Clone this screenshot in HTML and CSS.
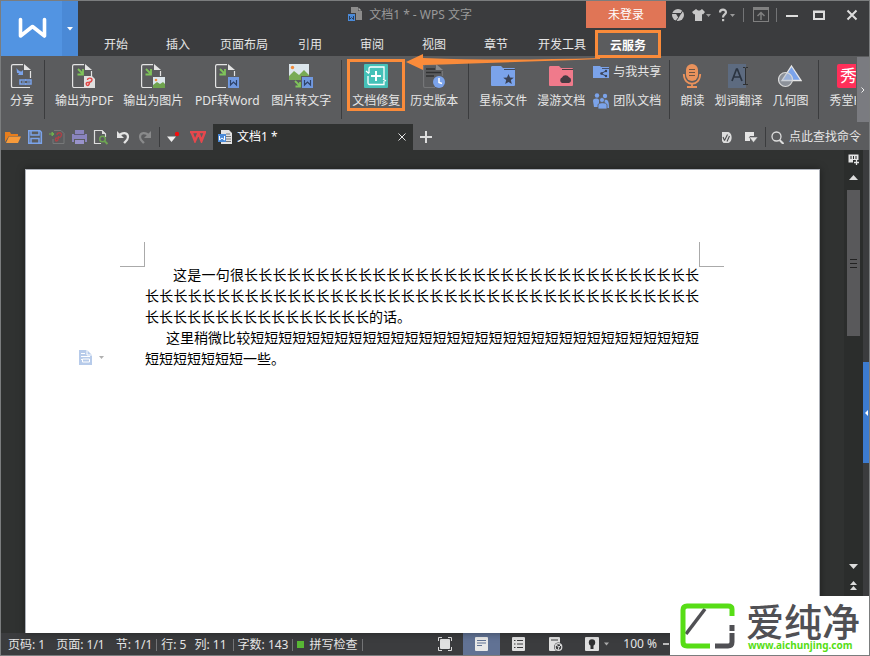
FILE: index.html
```
<!DOCTYPE html>
<html lang="zh-CN">
<head>
    <meta charset="UTF-8">
    <meta name="viewport" content="width=device-width, initial-scale=1.0">
    <title>文档1 * - WPS 文字</title>
    <link rel="stylesheet" href="styles.css">
</head>
<body>
    <div class="app">
        <header class="header">
            <button class="logo" aria-label="WPS">
                <svg width="61" height="55" viewBox="0 0 61 55"><path d="M19.500 18.500v16.500l12-9.500 12 9.500v-16.500" fill="none" stroke="#fff" stroke-width="3.600" stroke-linecap="round" stroke-linejoin="round"/></svg>
                <span class="logo-drop"><svg width="6" height="4" viewBox="0 0 6 4"><path d="M0 0h6L3 3.500z" fill="#fff"/></svg></span>
            </button>
            <div class="header-main">
                <div class="title-row">
                    <div class="title">
                        <svg width="15" height="15" viewBox="0 0 15 15"><path d="M3 0h7v4h4v9H8V6H3z" fill="#8c8c8c"/><path d="M10.500.5l3 3h-3z" fill="#aaa"/><rect y="7" width="7" height="7" fill="#4a8ad8"/><path d="M1.500 9v3.500l2-2 2 2V9" fill="none" stroke="#2b3f5c"/></svg>
                        <h1>文档1 * - WPS 文字</h1>
                    </div>
                    <button class="login">未登录</button>
                    <div class="window-tools">
                        <button aria-label="皮肤"><svg width="14" height="14" viewBox="0 0 14 14"><circle cx="7" cy="7" r="6" fill="#c4c4c4"/><path d="M4.500 5h6L7.500 10z" fill="#3b3c3e"/><path d="M1 5.500h4M10 5.500L12 2M7.500 9.500L5 13" stroke="#3b3c3e" fill="none"/></svg></button>
                        <button aria-label="外观"><svg width="19" height="14" viewBox="0 0 19 14"><path d="M4 1l2 1.500h2L10 1l3 3-2 2.500-1-.5v7H3V6l-1 .5L0 4z" fill="#c8c8c8"/><path d="M14 6h5l-2.500 3z" fill="#999"/></svg></button>
                        <button aria-label="帮助"><svg width="18" height="14" viewBox="0 0 18 14"><path d="M2 4.500C2 .8 8 .8 8 4.300 8 6.500 5 6.500 5 9.500" fill="none" stroke="#c8c8c8" stroke-width="2.200"/><path d="M4 11h2.200v2.200H4z" fill="#c8c8c8"/><path d="M12 6h5l-2.500 3z" fill="#999"/></svg></button>
                        <i class="line"></i>
                        <button aria-label="收起功能区"><svg width="16" height="15" viewBox="0 0 16 15"><rect x=".5" y=".5" width="15" height="14" fill="none" stroke="#808080"/><path d="M0 2h16" stroke="#808080" stroke-width="2"/><path d="M8 13V6M4.500 9L8 5.500 11.500 9" fill="none" stroke="#808080" stroke-width="1.500"/></svg></button>
                        <i class="line"></i>
                        <button class="window-button" aria-label="最小化"><svg width="12" height="12" viewBox="0 0 12 12"><path d="M0 7h12" stroke="#ddd" stroke-width="2"/></svg></button>
                        <button class="window-button" aria-label="最大化"><svg width="12" height="10" viewBox="0 0 12 10"><path d="M1 2h10v7H1zM0 1.500h12" fill="none" stroke="#ddd" stroke-width="2"/></svg></button>
                        <button class="window-button" aria-label="关闭"><svg width="12" height="12" viewBox="0 0 12 12"><path d="M1.500 1.500l9 9M10.500 1.500l-9 9" stroke="#ddd" stroke-width="2"/></svg></button>
                    </div>
                </div>
                <nav class="tabs">
                    <button>开始</button>
                    <button>插入</button>
                    <button>页面布局</button>
                    <button>引用</button>
                    <button>审阅</button>
                    <button>视图</button>
                    <button>章节</button>
                    <button>开发工具</button>
                    <button class="active marked">云服务</button>
                </nav>
            </div>
        </header>

        <div class="ribbon">
            <button class="tool">
                <svg width="24" height="24" viewBox="0 0 24 24"><path d="M13 .6H3a1.500 1.500 0 0 0-1.500 1.500v20A1.500 1.500 0 0 0 3 23.500h17M20.500 7v7" fill="none" stroke="#e4e4e4" stroke-width="1.200"/><path d="M14 0l7 6h-7z" fill="#e4e4e4"/><path d="M6.500 4l.5 5h2l-1 2h5V6l-1.500 1.500C9 7.500 8 6 6.500 4z" fill="#7ba3ea"/><path d="M10 16h11v4H10z" fill="none" stroke="#7ba3ea" stroke-width="1.500"/><path d="M12 18h3M17 18h3M15.700 15v2M15.700 19v2" stroke="#7ba3ea"/></svg>
                <span>分享</span>
            </button>
            <i class="divider"></i>
            <button class="tool">
                <svg width="24" height="24" viewBox="0 0 24 24"><path d="M12 .6H2A1.500 1.500 0 0 0 .6 2v20A1.500 1.500 0 0 0 2 23.500h10M19.500 7v5" fill="none" stroke="#e4e4e4" stroke-width="1.200"/><path d="M13 0l7 6h-7z" fill="#e4e4e4"/><path d="M6 5l5 5M11 5v5.500H5.500" fill="none" stroke="#7fc35a" stroke-width="1.800"/><path d="M12 12h8l3 3v9H12z" fill="#e0e0e0"/><path d="M15.500 16c0-2.500 5-2.500 4.500 0s-3 2.500-4.500 2.500c-2 0-1.500 3 0 3s2-2 2-4" fill="none" stroke="#e04545" stroke-width="1.400"/></svg>
                <span>输出为PDF</span>
            </button>
            <button class="tool">
                <svg width="24" height="24" viewBox="0 0 24 24"><path d="M12 .6H2A1.500 1.500 0 0 0 .6 2v20A1.500 1.500 0 0 0 2 23.500h9M19.500 7v5" fill="none" stroke="#e4e4e4" stroke-width="1.200"/><path d="M13 0l7 6h-7z" fill="#e4e4e4"/><path d="M5 5l5 5M10 5v5.500H4.500" fill="none" stroke="#7fc35a" stroke-width="1.800"/><path d="M12 13h12v11H12z" fill="#dce6ec"/><circle cx="15" cy="16" r="1.300" fill="#f08a3c"/><path d="M12 24v-3l4-3 3 2 3-2 2 2v4z" fill="#6fa34e"/></svg>
                <span>输出为图片</span>
            </button>
            <button class="tool wide">
                <svg width="24" height="24" viewBox="0 0 24 24"><path d="M12 .6H2A1.500 1.500 0 0 0 .6 2v20A1.500 1.500 0 0 0 2 23.500h9M19.500 7v5" fill="none" stroke="#e4e4e4" stroke-width="1.200"/><path d="M13 0l7 6h-7z" fill="#e4e4e4"/><path d="M5 5l5 5M10 5v5.500H4.500" fill="none" stroke="#7fc35a" stroke-width="1.800"/><path d="M13 13h11v11H13z" fill="#7199e0"/><path d="M15.500 16v5l3-3 3 3v-5" fill="none" stroke="#2f4368" stroke-width="1.200"/></svg>
                <span>PDF转Word</span>
            </button>
            <button class="tool">
                <svg width="24" height="24" viewBox="0 0 24 24"><path d="M0 0h20v16H0z" fill="#dce6ec"/><circle cx="3.500" cy="3.500" r="1.700" fill="#f08a3c"/><path d="M0 16v-4l5-5 5 4 5-5 5 5v5z" fill="#78ab55"/><path d="M12 12h12v12H12z" fill="#5b5c5e"/><path d="M13 13h11v11H13z" fill="#7199e0"/><path d="M15.500 16v5l3-3 3 3v-5" fill="none" stroke="#2f4368" stroke-width="1.200"/><path d="M6 17l5 5M11 18v4.500H6.500" fill="none" stroke="#7fc35a" stroke-width="1.800"/></svg>
                <span>图片转文字</span>
            </button>
            <i class="divider"></i>
            <button class="tool marked">
                <svg width="24" height="24" viewBox="0 0 24 24"><rect width="24" height="24" rx="1" fill="#45c1b8"/><path d="M5 9V4.500A1.500 1.500 0 0 1 6.500 3H20v12M20 17v3.500H5.500A1.500 1.500 0 0 1 4 19v-7M2 7l3 2.500M22 17l-3-2" fill="none" stroke="#fff" stroke-width="1.300"/><path d="M12 7v10M7 12h10" stroke="#fff" stroke-width="2"/></svg>
                <span>文档修复</span>
            </button>
            <button class="tool">
                <svg width="24" height="24" viewBox="0 0 24 24"><path d="M14 .6H3A1.500 1.500 0 0 0 1.600 2v20A1.500 1.500 0 0 0 3 23.500h10M20.500 7v5" fill="none" stroke="#757678" stroke-width="1.200"/><path d="M14 0l7 6h-7z" fill="#8b8b8c"/><path d="M4 5h9M4 8.500h15M4 12h8" stroke="#303132" stroke-width="1.400"/><circle cx="17" cy="18" r="6" fill="#7ba3ea"/><path d="M17 14v4.500l3 1" fill="none" stroke="#fff" stroke-width="1.500"/></svg>
                <span>历史版本</span>
            </button>
            <i class="divider"></i>
            <button class="tool">
                <svg width="24" height="24" viewBox="0 0 24 24"><path d="M0 3.500C0 2.500.5 2 1.500 2H10l2 2h11a1 1 0 0 1 1 1v16a1 1 0 0 1-1 1H1a1 1 0 0 1-1-1z" fill="#7ba3ea"/><path d="M13 5.500h11" stroke="#3e4860"/><path d="M17.500 10l1.500 3.500 3.800.2-3 2.400 1 3.900-3.300-2.100-3.300 2.100 1-3.900-3-2.400 3.800-.2z" fill="#3b4254"/></svg>
                <span>星标文件</span>
            </button>
            <button class="tool">
                <svg width="24" height="24" viewBox="0 0 24 24"><path d="M0 3.500C0 2.500.5 2 1.500 2H10l2 2h11a1 1 0 0 1 1 1v16a1 1 0 0 1-1 1H1a1 1 0 0 1-1-1z" fill="#f07a8b"/><path d="M13 5.500h11" stroke="#4d3a40"/><path d="M13 19a3 3 0 0 1 0-5.500 4 4 0 0 1 7-.2A3 3 0 0 1 20 19z" fill="#463b42"/></svg>
                <span>漫游文档</span>
            </button>
            <div class="tool-stack">
                <button><svg width="16" height="16" viewBox="0 0 16 16"><path d="M0 2h7l1 1h8v11H0z" fill="#7ba3ea"/><path d="M9 4.500h7" stroke="#46526e"/><path d="M13 7l-5 2.500 5 2.500" fill="none" stroke="#3b4254"/><circle cx="8.500" cy="9.500" r="1.300" fill="#3b4254"/><circle cx="13" cy="7" r="1.200" fill="#3b4254"/><circle cx="13" cy="12" r="1.200" fill="#3b4254"/></svg>与我共享</button>
                <button><svg width="16" height="16" viewBox="0 0 16 16"><circle cx="4" cy="2.500" r="2.200" fill="#7ba3ea"/><circle cx="12" cy="3" r="2.200" fill="#7ba3ea"/><path d="M0 8c0-3 5-3 6-1v7H1z" fill="#7ba3ea"/><path d="M11 7c4-1 5 1 5 8h-3z" fill="#7ba3ea"/><path d="M5 16v-4c0-3 9-3 9 0v4z" fill="#7ba3ea" stroke="#5b5c5e" stroke-width=".8"/><circle cx="9" cy="7" r="2.500" fill="#7ba3ea" stroke="#5b5c5e" stroke-width=".8"/></svg>团队文档</button>
            </div>
            <i class="divider"></i>
            <button class="tool">
                <svg width="24" height="24" viewBox="0 0 24 24"><rect x="6" width="12" height="17" rx="6" fill="#ea925c"/><path d="M9 5.500h6M9 8.500h6M9 11.500h6" stroke="#6d5545"/><path d="M3.800 10c0 13 16.400 13 16.400 0M12 19v4M7 23h10" fill="none" stroke="#ea925c" stroke-width="1.800"/></svg>
                <span>朗读</span>
            </button>
            <button class="tool">
                <svg width="24" height="24" viewBox="0 0 24 24"><path d="M2 0h18v24H2z" fill="#5d6b80"/><path d="M6 17l4.500-12h.8L16 17M7.500 13h7" fill="none" stroke="#2b3440" stroke-width="1.700"/><path d="M17 3.500h2l.5.5.500-.5h2M19.500 4v16M17 20.500h5" fill="none" stroke="#2f3133"/></svg>
                <span>划词翻译</span>
            </button>
            <button class="tool">
                <svg width="24" height="24" viewBox="0 0 24 24"><path d="M13.500 2L23 16.500H4z" fill="#7ba3ea" stroke="#e8e8e8" stroke-width="1.300"/><circle cx="7.500" cy="15.500" r="7" fill="#b5bdca" fill-opacity=".55" stroke="#d8d8d8" stroke-width="1.200"/></svg>
                <span>几何图</span>
            </button>
            <i class="divider"></i>
            <button class="tool clipped">
                <svg width="24" height="24" viewBox="0 0 24 24"><rect width="24" height="24" rx="2" fill="#ff2f59"/><text class="badge-char" x="3" y="18">秀</text></svg>
                <span>秀堂H5</span>
            </button>
            <button class="ribbon-next" aria-label="更多"><svg width="4" height="6" viewBox="0 0 4 6"><path d="M.5.5L3 3 .5 5.500" fill="none" stroke="#eee"/></svg></button>
        </div>

        <div class="quickbar">
            <div class="quick-icons">
                <button aria-label="打开"><svg width="16" height="16" viewBox="0 0 16 16"><path d="M0 13V3h5l1 2h7v2H4z" fill="#e87e1d"/><path d="M4 7.500h12L13 14H1z" fill="#f79a3a"/></svg></button>
                <button aria-label="保存"><svg width="16" height="16" viewBox="0 0 16 16"><path d="M1.800 1.800h11l1.500 1.500v11H1.800z" fill="none" stroke="#7ba3ea" stroke-width="1.600"/><path d="M4 2v4h8V2M4 14V9.500h8V14" fill="none" stroke="#7ba3ea" stroke-width="1.500"/></svg></button>
                <button aria-label="输出PDF"><svg width="16" height="16" viewBox="0 0 16 16"><path d="M5 1.500h7l3 3v10H4V10" fill="none" stroke="#777879"/><path d="M0 5h3M3 3L5 5 3 7z" fill="#6fae4d" stroke="#6fae4d"/><path d="M8 6c0-3 5-3 4.500 0S9 9 7.500 9s-1.500 3 0 3 2-2 2-5" fill="none" stroke="#ad4247" stroke-width="1.400"/></svg></button>
                <button aria-label="打印"><svg width="16" height="16" viewBox="0 0 16 16"><path d="M4 1h9v4h3v8h-2v-3H3v3H1V5h3z" fill="#8a84bd"/><path d="M3 5.500h11" stroke="#5f5c78"/><path d="M4 11h9v4H4z" fill="#9993cb"/></svg></button>
                <button aria-label="打印预览"><svg width="16" height="16" viewBox="0 0 16 16"><path d="M8 14.500H1.500v-13H9L12.500 5v3" fill="none" stroke="#ddd" stroke-width="1.200"/><path d="M9 1v4h4z" fill="#ddd"/><circle cx="9.500" cy="10" r="2.800" fill="none" stroke="#6da452" stroke-width="1.400"/><path d="M11.500 12l3 3" stroke="#6da452" stroke-width="2"/></svg></button>
                <button aria-label="撤销"><svg width="16" height="16" viewBox="0 0 16 16"><path d="M4 7c3-4 9-4 9 1 0 3-2 4-4 6" fill="none" stroke="#e4e4e4" stroke-width="2.200"/><path d="M2 2v7h7z" fill="#e4e4e4"/></svg></button>
                <button aria-label="恢复"><svg width="16" height="16" viewBox="0 0 16 16"><path d="M12 7C9 3 3 3 3 8c0 3 2 4 4 6" fill="none" stroke="#898a8b" stroke-width="2.200"/><path d="M14 2v7H7z" fill="#898a8b"/></svg></button>
            </div>
            <i class="line"></i>
            <button class="quick-more" aria-label="自定义"><svg width="14" height="14" viewBox="0 0 14 14"><path d="M0 6.500h9L4.500 12z" fill="#eee"/><circle cx="10" cy="4" r="2.200" fill="#f40d0d"/></svg></button>
            <button class="wps-home" aria-label="首页"><svg width="17" height="12" viewBox="0 0 17 12"><path d="M0 1h9M1.500 1L5 10l3.500-8 3 8L15 1M8 1h8" fill="none" stroke="#e5484d" stroke-width="2.400"/></svg></button>
            <div class="doc-tab">
                <svg width="15" height="15" viewBox="0 0 15 15"><path d="M3 0h8l3 3v11H3z" fill="#e2e2e2"/><path d="M8 4h4M8 6.500h5M8 9h5M8 11.500h5" stroke="#77797b"/><path d="M0 4h8v8H0z" fill="#4a8ad8"/><path d="M1.500 6v4l2.500-2 2.500 2V6" fill="none" stroke="#fff"/></svg>
                <span>文档1 *</span>
                <button aria-label="关闭文档"><svg width="8" height="8" viewBox="0 0 8 8"><path d="M.5.5l7 7M7.500.5l-7 7" stroke="#e4e4e4"/></svg></button>
            </div>
            <button class="new-tab" aria-label="新建"><svg width="12" height="12" viewBox="0 0 12 12"><path d="M6 0v12M0 6h12" stroke="#ddd" stroke-width="2"/></svg></button>
            <div class="quick-right">
                <button aria-label="文档助手"><svg width="10" height="11" viewBox="0 0 10 11"><path d="M0 0h5.500C11 0 11 11 5.500 11H1.500L0 9z" fill="#ddd"/><path d="M2.500 8.500l3-6M5 9.500L7.500 4M1 5l1.500 3.500" stroke="#4b4c4e" stroke-width="1.100" fill="none"/></svg></button>
                <button aria-label="批注"><svg width="13" height="12" viewBox="0 0 13 12"><path d="M0 1h9v4H5v5H0z" fill="#e4e4e4"/><path d="M4 6h9L8.500 11.500z" fill="#e4e4e4" stroke="#5b5c5e" stroke-width=".6"/></svg></button>
                <i class="line"></i>
                <button class="search"><svg width="13" height="13" viewBox="0 0 13 13"><circle cx="5.500" cy="5.500" r="4.500" fill="none" stroke="#ddd" stroke-width="1.300"/><path d="M8.500 9l4 4" stroke="#ddd" stroke-width="2"/></svg>点此查找命令</button>
            </div>
        </div>

        <main class="workspace">
            <article class="page">
                <div class="sheet-text">
                    <p>这是一句很长长长长长长长长长长长长长长长长长长长长长长长长长长长长长长长长长长长长长长长长长长长长长长长长长长长长长长长长长长长长长长长长长长长长长长长长长长长长长长长长长长长长长长长的话。</p>
                    <p class="second">这里稍微比较短短短短短短短短短短短短短短短短短短短短短短短短短短短短短短短短短短短短短短短一些。</p>
                </div>
                <button class="paste-option" aria-label="段落选项"><svg width="25" height="15" viewBox="0 0 25 15"><path d="M0 0h8l5 5v10H0z" fill="#b7cbea"/><path d="M8 0v5h5M2 3.500h4M2 6.500h5M2 9.500h1M3.500 9h7v3h-7zM2 6.500h9" fill="none" stroke="#fff"/><path d="M20 6h5l-2.500 3z" fill="#b0b0b0"/></svg></button>
            </article>
            <div class="scrollbar">
                <button aria-label="选择浏览对象"><svg width="12" height="11" viewBox="0 0 12 11"><path d="M.5.5h10v8H.5z" fill="#e4e4e4"/><path d="M3 2v3M5.500 2v3M8 2v3" stroke="#2b2d2c"/><path d="M5 6h7v5H5z" fill="#2b2d2c"/><path d="M8.500 6v5M6 8.500h5" stroke="#e4e4e4" stroke-width="1.300"/></svg></button>
                <button aria-label="向上"><svg width="9" height="5" viewBox="0 0 9 5"><path d="M0 5h9L4.500 0z" fill="#ddd"/></svg></button>
                <div class="thumb"><i></i><i></i><i></i></div>
                <button class="down" aria-label="向下"><svg width="9" height="5" viewBox="0 0 9 5"><path d="M0 0h9L4.500 5z" fill="#ddd"/></svg></button>
                <button aria-label="上一页"><svg width="7" height="9" viewBox="0 0 7 9"><path d="M0 4h7L3.500 0zM0 9h7L3.500 5z" fill="#ddd"/></svg></button>
            </div>
            <div class="side-rail">
                <button aria-label="展开任务窗格"><svg width="3" height="6" viewBox="0 0 3 6"><path d="M3 0v6L0 3z" fill="#fff"/></svg></button>
            </div>
        </main>

        <footer class="status">
            <div class="status-left">
                <span>页码: 1</span>
                <span class="page-count">页面: 1/1</span>
                <span>节: 1/1</span>
                <i class="line"></i>
                <span>行: 5</span>
                <span class="column">列: 11</span>
                <i class="line"></i>
                <span>字数: 143</span>
                <i class="line"></i>
                <button class="spell">拼写检查</button>
                <i class="line"></i>
            </div>
            <div class="views">
                <button aria-label="全屏"><svg width="14" height="14" viewBox="0 0 14 14"><path d="M.5 4V.5H4M10 .5h3.500V4M13.500 10v3.500H10M4 13.500H.5V10" fill="none" stroke="#ddd"/><rect x="2" y="2" width="10" height="10" rx="1" fill="#e0e0e0"/></svg></button>
                <button class="active" aria-label="页面视图"><svg width="13" height="14" viewBox="0 0 13 14"><rect width="13" height="14" rx="1" fill="#e8e8e8"/><path d="M2 3.500h9M2 6h9M2 8.500h5" stroke="#617294"/></svg></button>
                <button aria-label="大纲视图"><svg width="13" height="14" viewBox="0 0 13 14"><rect width="13" height="14" rx="1" fill="#e0e0e0"/><path d="M2 3.500h1.500M5 3.500h6M2 7h1.500M5 7h6M2 10.500h1.500M5 10.500h6" stroke="#3b3c3e"/></svg></button>
                <button aria-label="Web视图"><svg width="14" height="14" viewBox="0 0 14 14"><path d="M0 1a1 1 0 0 1 1-1h9a1 1 0 0 1 1 1v13H1a1 1 0 0 1-1-1z" fill="#e0e0e0"/><path d="M2 3h7" stroke="#3b3c3e"/><circle cx="9.500" cy="10" r="4.500" fill="#3b3c3e"/><circle cx="9.500" cy="10" r="3.300" fill="none" stroke="#ddd" stroke-width="1.200"/><path d="M7 8l3 2 2-2M9 13l1-3" stroke="#ddd" fill="none"/></svg></button>
                <button class="eye-care" aria-label="护眼模式"><svg width="24" height="14" viewBox="0 0 24 14"><rect width="14" height="14" rx="1" fill="#e0e0e0"/><circle cx="7" cy="5.500" r="3.200" fill="#303132"/><path d="M5.500 8h3v4h-3z" fill="#303132"/><path d="M19 5.500h5L21.500 8.500z" fill="#aaa"/></svg></button>
                <span class="zoom-level">100 %</span>
                <button class="zoom-out" aria-label="缩小"><svg width="6" height="2" viewBox="0 0 6 2"><path d="M0 1h6" stroke="#bbb" stroke-width="2"/></svg></button>
            </div>
        </footer>

        <!-- arrow from the tab to the repair tool -->
        <svg class="arrow" width="194" height="18" viewBox="0 0 194 18"><path d="M0 8L17 0v4q80 3 177 0v1Q90 9 17 11v5z" fill="#fa8b3a"/></svg>

        <aside class="brand">
            <svg width="56" height="46" viewBox="0 0 56 46"><path d="M6 31L25 6" stroke="#505054" stroke-width="3.500"/><path d="M52 13V6q0-3-4-3H7Q3 3 3 7v32q0 4 4 4h23" fill="none" stroke="#57dd16" stroke-width="5"/><path d="M35 43h13q4 0 4-4V30M52 22v6" fill="none" stroke="#505054" stroke-width="5"/></svg>
            <div>
                <strong>爱纯净</strong>
                <a href="#">www.aichunjing.com</a>
            </div>
        </aside>
    </div>
</body>
</html>
```
FILE: styles.css
```
* {
    box-sizing: border-box;
}
body {
    margin: 0;
    font-family: "Noto Sans", "Noto Sans CJK SC", sans-serif;
    font-size: 12px;
    line-height: 18px;
    color: #e6e6e6;
    background-color: #303231;
}
button {
    display: flex;
    align-items: center;
    justify-content: center;
    padding: 0;
    border: none;
    background: none;
    color: inherit;
    font: inherit;
    white-space: nowrap;
    cursor: pointer;
}
svg {
    display: block;
    flex-shrink: 0;
}
.app {
    position: relative;
    display: flex;
    flex-direction: column;
    height: 100vh;
    overflow: hidden;
    border: 1px solid #7b7d7e;
}
.line {
    width: 1px;
    height: 14px;
    background-color: #737476;
}

/* title and menu */
.header {
    display: flex;
    height: 55px;
    flex-shrink: 0;
    background-color: #3b3c3e;
}
.logo {
    background-color: #5294e2;
}
.logo-drop {
    display: flex;
    align-items: center;
    justify-content: center;
    width: 16px;
    height: 100%;
    background-color: #4a89d6;
}
.header-main {
    flex: 1;
    min-width: 0;
}
.title-row {
    display: flex;
    height: 27px;
}
.title {
    display: flex;
    flex: 1;
    align-items: center;
    justify-content: flex-end;
    gap: 6px;
    padding-right: 114px;
    color: #999;
}
h1 {
    margin: 0;
    font-size: 12px;
    font-weight: normal;
}
.login {
    width: 80px;
    background-color: #e07556;
    color: #fff;
}
.window-tools {
    display: flex;
    align-items: center;
    gap: 7px;
    padding: 0 11px 0 5px;
}
.window-tools .line {
    margin: 0 2px 0 0;
}
.window-button {
    width: 12px;
    margin-right: 8px;
}
.window-button + .window-button {
    margin-right: 14px;
}
.window-tools .window-button:last-child {
    margin-right: 0;
}
.tabs {
    display: flex;
    height: 28px;
    padding: 4px 0 0 7px;
}
.tabs button {
    min-width: 62px;
    padding: 2px 11px 0;
}
.tabs .active {
    border-top: 1px solid #4a89d6;
    background-color: #5b5c5e;
    color: #fff;
    font-weight: bold;
}
.tabs .marked {
    outline: 3px solid #fa8b3a;
    outline-offset: -1px;
    z-index: 1;
}

/* ribbon */
.ribbon {
    position: relative;
    display: flex;
    height: 68px;
    flex-shrink: 0;
    padding: 3px 13px 0 4px;
    overflow: hidden;
    background-color: #5b5c5e;
}
.tool {
    display: flex;
    flex-direction: column;
    justify-content: flex-start;
    flex-shrink: 0;
    gap: 4px;
    height: 52px;
    padding: 5px 5px 0;
}
.wide {
    min-width: 78px;
}
.ribbon .marked {
    outline: 3px solid #fa8b3a;
    outline-offset: -3px;
}
.divider {
    width: 1px;
    height: 59px;
    margin: 1px 5px;
    flex-shrink: 0;
    background-color: #3b3c3e;
}
.tool-stack {
    display: flex;
    flex-direction: column;
    gap: 11px;
    padding: 4px 3px 0;
}
.tool-stack button {
    gap: 4px;
}
.clipped {
    flex: 1;
    min-width: 0;
    align-items: flex-start;
    padding-right: 0;
    overflow: hidden;
}
.clipped svg {
    margin-left: 8px;
}
.badge-char {
    font-size: 17px;
    fill: #fff;
}
.ribbon-next {
    position: absolute;
    top: 1px;
    right: 0;
    width: 12px;
    height: 65px;
    background-color: #7a7b80;
}

/* quick access and document tabs */
.quickbar {
    display: flex;
    align-items: center;
    height: 26px;
    flex-shrink: 0;
    padding-left: 4px;
    background-color: #5b5c5e;
}
.quickbar .line {
    height: 20px;
    background-color: #3b3c3e;
}
.quick-icons {
    display: flex;
    gap: 6px;
    margin-right: 6px;
}
.quick-more {
    margin-left: 7px;
}
.wps-home {
    margin: 0 6px 0 9px;
}
.doc-tab {
    display: flex;
    align-items: center;
    gap: 4px;
    width: 200px;
    height: 100%;
    padding: 0 7px 0 5px;
    background-color: #303231;
    color: #fff;
}
.doc-tab button {
    margin-left: auto;
}
.new-tab {
    margin-left: 7px;
}
.quick-right {
    display: flex;
    align-items: center;
    margin-left: auto;
    padding-right: 8px;
}
.quick-right button {
    margin-right: 13px;
}
.quick-right .line {
    margin: 0 5px 0 -6px;
}
.quick-right .search {
    gap: 5px;
    margin: 0;
}

/* document */
.workspace {
    display: flex;
    flex: 1;
    min-height: 0;
}
.page {
    position: relative;
    flex: 1;
    margin: 19px 24px 0;
    padding: 94px 120px 0 119px;
    border: 1px solid #aeb2ba;
    border-bottom: none;
    background-color: #fff;
    box-shadow: 0 0 8px rgba(0, 0, 0, 0.4);
    color: #000;
}
.sheet-text {
    position: relative;
    font-family: "Noto Sans CJK SC", sans-serif;
    font-size: 14px;
    line-height: 21px;
    text-align: justify;
}
.sheet-text::before,
.sheet-text::after {
    content: "";
    position: absolute;
    top: -22px;
    width: 24px;
    height: 24px;
    border-bottom: 1px solid #aaa;
}
.sheet-text::before {
    right: 100%;
    border-right: 1px solid #aaa;
}
.sheet-text::after {
    left: 100%;
    border-left: 1px solid #aaa;
}
.sheet-text p {
    margin: 0;
    text-indent: 28px;
}
.sheet-text .second {
    text-indent: 21px;
}
.paste-option {
    position: absolute;
    top: 180px;
    left: 53px;
}
.scrollbar {
    display: flex;
    flex-direction: column;
    align-items: center;
    width: 19px;
    padding: 4px 0;
    background-color: #2b2d2c;
}
.thumb {
    display: flex;
    flex-direction: column;
    align-items: center;
    justify-content: center;
    gap: 3px;
    width: 13px;
    height: 146px;
    margin-top: 10px;
    background-color: #59595b;
}
.thumb i {
    width: 7px;
    height: 1px;
    background-color: #222;
}
.scrollbar button:nth-child(2) {
    margin-top: 10px;
}
.scrollbar .down {
    margin: auto 0 12px;
}
.scrollbar button:last-child {
    margin-bottom: 39px;
}
.side-rail {
    display: flex;
    align-items: center;
    width: 6px;
    padding-top: 42px;
    background-color: #3b3c3e;
}
.side-rail button {
    width: 6px;
    height: 101px;
    background-color: #3c7bd0;
}

/* status bar */
.status {
    display: flex;
    justify-content: space-between;
    height: 22px;
    flex-shrink: 0;
    padding-right: 200px;
    background-color: #3b3c3e;
}
.status-left {
    display: flex;
    align-items: center;
    gap: 4px;
    padding: 1px 0 0 7px;
    white-space: nowrap;
}
.status-left .line {
    height: 12px;
}
.page-count {
    margin: 0 7px;
}
.column {
    margin: 0 2px 0 4px;
}
.spell::before {
    content: "";
    width: 7px;
    height: 7px;
    margin-right: 5px;
    background-color: #58b735;
}
.views {
    display: flex;
    align-items: center;
}
.views button {
    width: 37px;
    height: 100%;
}
.views .active {
    background-color: #617294;
}
.views .eye-care {
    width: 45px;
}
.zoom-level {
    margin: 0 6px 0 4px;
}
.views .zoom-out {
    width: 6px;
}

/* overlays */
.arrow {
    position: absolute;
    top: 53px;
    left: 405px;
    z-index: 2;
}
.brand {
    position: absolute;
    right: -1px;
    bottom: -1px;
    display: flex;
    align-items: center;
    gap: 10px;
    width: 200px;
    height: 60px;
    padding-left: 10px;
    background-color: #fff;
}
.brand strong {
    display: block;
    font-size: 38px;
    font-weight: 500;
    line-height: 38px;
    color: #505054;
}
.brand a {
    display: block;
    padding-left: 2px;
    font-size: 10px;
    font-weight: bold;
    line-height: 11px;
    color: #57dd16;
    text-decoration: none;
}
```
